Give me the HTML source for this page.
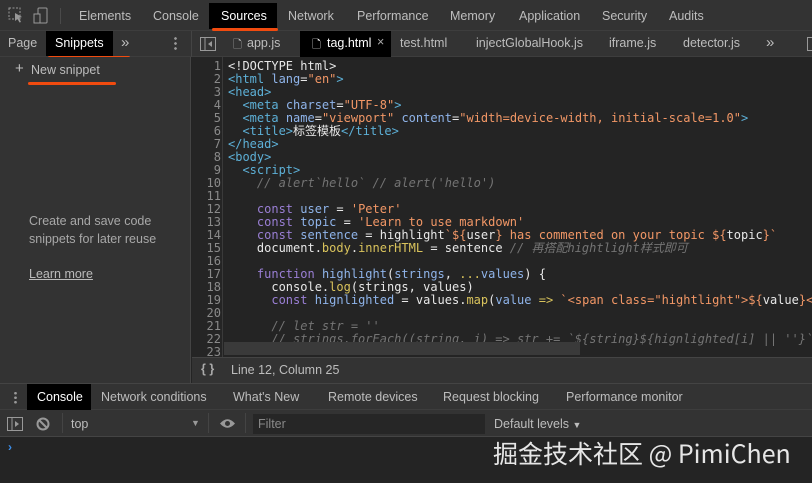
<!DOCTYPE html>
<html><head><style>
*{margin:0;padding:0;box-sizing:border-box}
body{width:812px;height:483px;background:#242424;font-family:"Liberation Sans","Noto Sans CJK SC",sans-serif;font-size:12.5px;color:#bdbdbd;position:relative;overflow:hidden}
.a{position:absolute;white-space:nowrap}
.top{left:0;top:0;width:812px;height:31px;background:#333;border-bottom:1px solid #3d3d3d}
.bar2{left:0;top:31px;width:812px;height:26px;background:#333;border-bottom:1px solid #3d3d3d}
.left{left:0;top:57px;width:191px;height:326px;background:#333;border-right:1px solid #444}
.hl{background:#000;color:#fff}
.red{background:#f14b0f;height:3px;border-radius:2px}
.code{left:192px;top:60px;font-family:"DejaVu Sans Mono","Liberation Mono","Noto Sans CJK SC",monospace;font-size:12px;line-height:13px;color:#e8e8e8}
.gut{left:192px;top:57px;width:31px;height:300px;border-right:1px solid #3a3a3a;background:#252525}
.num{color:#8a8a8a;text-align:right;width:29px}
.t{color:#5db0d7}.s{color:#f29766}.k{color:#9a7fd5}.v{color:#8fb4ea}.c{color:#747474;font-style:italic}.f{color:#d9c35c}
</style></head><body>
<div class="a top"></div>
<svg class="a" style="left:8px;top:7px" width="16" height="17"><rect x="1" y="1" width="11" height="11" fill="none" stroke="#999" stroke-dasharray="2 1.5"/><path d="M7 6 L14 10 L11 11 L13 15 L11.5 15.5 L9.5 12 L7 14Z" fill="#999"/></svg>
<svg class="a" style="left:33px;top:7px" width="16" height="17"><rect x="5" y="1" width="9" height="15" rx="1" fill="none" stroke="#999"/><rect x="1" y="7" width="6" height="9" fill="#333" stroke="#999"/></svg>
<div class="a" style="left:60px;top:8px;width:1px;height:16px;background:#4a4a4a"></div>
<div class="a" style="left:79px;top:9px">Elements</div>
<div class="a" style="left:153px;top:9px">Console</div>
<div class="a hl" style="left:209px;top:3px;width:68px;height:26px"></div>
<div class="a" style="left:221px;top:9px;color:#fff">Sources</div>
<div class="a red" style="left:212px;top:28px;width:66px"></div>
<div class="a" style="left:288px;top:9px">Network</div>
<div class="a" style="left:357px;top:9px">Performance</div>
<div class="a" style="left:450px;top:9px">Memory</div>
<div class="a" style="left:519px;top:9px">Application</div>
<div class="a" style="left:602px;top:9px">Security</div>
<div class="a" style="left:669px;top:9px">Audits</div>

<div class="a bar2"></div>
<div class="a" style="left:8px;top:36px">Page</div>
<div class="a hl" style="left:46px;top:31px;width:67px;height:25px"></div>
<div class="a" style="left:55px;top:36px;color:#fff">Snippets</div>
<div class="a red" style="left:48px;top:56px;width:82px"></div>
<div class="a" style="left:121px;top:34px;font-size:15px">»</div>
<div class="a" style="left:174px;top:36px;width:3px;height:14px;background:radial-gradient(circle,#999 1.2px,transparent 1.5px) 0 0/3px 5px"></div>
<div class="a" style="left:191px;top:31px;width:1px;height:26px;background:#444"></div>
<svg class="a" style="left:200px;top:37px" width="16" height="14"><rect x="0.5" y="0.5" width="15" height="13" fill="none" stroke="#999"/><line x1="5" y1="0" x2="5" y2="14" stroke="#999"/><path d="M12 4 L8 7 L12 10Z" fill="#999"/></svg>
<div class="a" style="left:233px;top:36px;font-size:11px">🗋</div>
<div class="a" style="left:247px;top:36px">app.js</div>
<div class="a hl" style="left:300px;top:31px;width:91px;height:26px"></div>
<div class="a" style="left:312px;top:36px;font-size:11px;color:#fff">🗋</div>
<div class="a" style="left:327px;top:36px;color:#fff">tag.html</div>
<div class="a" style="left:377px;top:35px;color:#aaa">×</div>
<div class="a" style="left:400px;top:36px">test.html</div>
<div class="a" style="left:476px;top:36px">injectGlobalHook.js</div>
<div class="a" style="left:609px;top:36px">iframe.js</div>
<div class="a" style="left:683px;top:36px">detector.js</div>
<div class="a" style="left:766px;top:34px;font-size:15px">»</div>
<div class="a" style="left:807px;top:37px;width:8px;height:14px;border:1px solid #999"></div>

<div class="a left"></div>
<div class="a" style="left:15px;top:62px;font-size:15px;line-height:14px">+</div>
<div class="a" style="left:31px;top:63px">New snippet</div>
<div class="a red" style="left:28px;top:82px;width:88px"></div>
<div class="a" style="left:29px;top:212px;color:#a8a8a8;line-height:18px">Create and save code<br>snippets for later reuse</div>
<div class="a" style="left:29px;top:267px;color:#bbb;text-decoration:underline">Learn more</div>

<div class="a gut"></div>
<div class="a code num">1<br>2<br>3<br>4<br>5<br>6<br>7<br>8<br>9<br>10<br>11<br>12<br>13<br>14<br>15<br>16<br>17<br>18<br>19<br>20<br>21<br>22<br>23</div>
<div class="a code" style="left:228px">&lt;!DOCTYPE html&gt;<br>
<span class="t">&lt;html</span> <span class="v">lang</span>=<span class="s">"en"</span><span class="t">&gt;</span><br>
<span class="t">&lt;head&gt;</span><br>
  <span class="t">&nbsp;&nbsp;&lt;meta</span> <span class="v">charset</span>=<span class="s">"UTF-8"</span><span class="t">&gt;</span><br>
<span class="t">&nbsp;&nbsp;&lt;meta</span> <span class="v">name</span>=<span class="s">"viewport"</span> <span class="v">content</span>=<span class="s">"width=device-width, initial-scale=1.0"</span><span class="t">&gt;</span><br>
<span class="t">&nbsp;&nbsp;&lt;title&gt;</span>标签模板<span class="t">&lt;/title&gt;</span><br>
<span class="t">&lt;/head&gt;</span><br>
<span class="t">&lt;body&gt;</span><br>
<span class="t">&nbsp;&nbsp;&lt;script&gt;</span><br>
<span class="c">&nbsp;&nbsp;&nbsp;&nbsp;// alert`hello` // alert('hello')</span><br>
<br>
&nbsp;&nbsp;&nbsp;&nbsp;<span class="k">const</span> <span class="v">user</span> = <span class="s">'Peter'</span><br>
&nbsp;&nbsp;&nbsp;&nbsp;<span class="k">const</span> <span class="v">topic</span> = <span class="s">'Learn to use markdown'</span><br>
&nbsp;&nbsp;&nbsp;&nbsp;<span class="k">const</span> <span class="v">sentence</span> = highlight<span class="s">`${</span>user<span class="s">} has commented on your topic ${</span>topic<span class="s">}`</span><br>
&nbsp;&nbsp;&nbsp;&nbsp;document.<span class="f">body</span>.<span class="f">innerHTML</span> = sentence <span class="c">// 再搭配hightlight样式即可</span><br>
<br>
&nbsp;&nbsp;&nbsp;&nbsp;<span class="k">function</span> <span class="v">highlight</span>(<span class="v">strings</span>, <span class="f">...</span><span class="v">values</span>) {<br>
&nbsp;&nbsp;&nbsp;&nbsp;&nbsp;&nbsp;console.<span class="f">log</span>(strings, values)<br>
&nbsp;&nbsp;&nbsp;&nbsp;&nbsp;&nbsp;<span class="k">const</span> <span class="v">hignlighted</span> = values.<span class="f">map</span>(<span class="v">value</span> <span class="f">=&gt;</span> <span class="s">`&lt;span class="hightlight"&gt;${</span>value<span class="s">}&lt;</span><br>
<br>
<span class="c">&nbsp;&nbsp;&nbsp;&nbsp;&nbsp;&nbsp;// let str = ''</span><br>
<span class="c">&nbsp;&nbsp;&nbsp;&nbsp;&nbsp;&nbsp;// strings.forEach((string, i) =&gt; str += `${string}${hignlighted[i] || ''}`</span></div>
<div class="a" style="left:224px;top:342px;width:356px;height:13px;background:#3a3a3a"></div>
<div class="a" style="left:192px;top:357px;width:620px;height:26px;background:#333;border-top:1px solid #444"></div>
<div class="a" style="left:201px;top:362px;color:#aaa;font-weight:bold">{ }</div>
<div class="a" style="left:231px;top:363px">Line 12, Column 25</div>

<div class="a" style="left:0;top:383px;width:812px;height:27px;background:#333;border-top:1px solid #444;border-bottom:1px solid #3d3d3d"></div>
<div class="a" style="left:14px;top:391px;width:3px;height:13px;background:radial-gradient(circle,#999 1.2px,transparent 1.5px) 0 0/3px 4.5px"></div>
<div class="a hl" style="left:27px;top:384px;width:64px;height:26px"></div>
<div class="a" style="left:37px;top:390px;color:#fff">Console</div>
<div class="a" style="left:101px;top:390px">Network conditions</div>
<div class="a" style="left:233px;top:390px">What's New</div>
<div class="a" style="left:328px;top:390px">Remote devices</div>
<div class="a" style="left:443px;top:390px">Request blocking</div>
<div class="a" style="left:566px;top:390px">Performance monitor</div>

<div class="a" style="left:0;top:410px;width:812px;height:27px;background:#333;border-bottom:1px solid #444"></div>
<svg class="a" style="left:7px;top:417px" width="16" height="14"><rect x="0.5" y="0.5" width="15" height="13" fill="none" stroke="#999"/><line x1="5" y1="0" x2="5" y2="14" stroke="#999"/><path d="M8 4 L12 7 L8 10Z" fill="#999"/></svg>
<svg class="a" style="left:36px;top:417px" width="14" height="14"><circle cx="7" cy="7" r="5.5" fill="none" stroke="#999" stroke-width="2"/><line x1="3" y1="3" x2="11" y2="11" stroke="#999" stroke-width="2"/></svg>
<div class="a" style="left:62px;top:413px;width:1px;height:20px;background:#444"></div>
<div class="a" style="left:71px;top:417px">top</div>
<div class="a" style="left:191px;top:418px;font-size:9px;color:#999">▼</div>
<div class="a" style="left:208px;top:413px;width:1px;height:20px;background:#444"></div>
<svg class="a" style="left:219px;top:418px" width="17" height="11"><path d="M1 5.5 Q8.5 -3 16 5.5 Q8.5 14 1 5.5Z" fill="#999"/><circle cx="8.5" cy="5.5" r="2.5" fill="#333"/></svg>
<div class="a" style="left:245px;top:413px;width:1px;height:20px;background:#444"></div>
<div class="a" style="left:253px;top:414px;width:232px;height:20px;background:#262626"></div>
<div class="a" style="left:258px;top:417px;color:#888">Filter</div>
<div class="a" style="left:494px;top:417px">Default levels <span style="font-size:9px">▼</span></div>
<div class="a" style="left:8px;top:440px;color:#3b8eea;font-size:12px;font-weight:bold">›</div>
<div class="a" style="left:493px;top:435px;font-size:25px;color:#e6e6e6;font-family:'Noto Sans CJK SC','Liberation Sans',sans-serif">掘金技术社区 @ PimiChen</div>
</body></html>
